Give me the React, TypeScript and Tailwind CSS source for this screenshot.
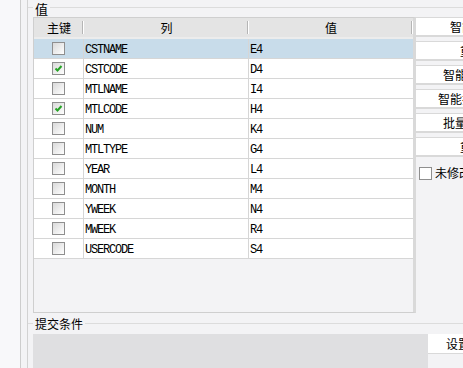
import React from "react";

const rows = [
  { name: "CSTNAME", val: "E4", key: false, sel: true },
  { name: "CSTCODE", val: "D4", key: true },
  { name: "MTLNAME", val: "I4", key: false },
  { name: "MTLCODE", val: "H4", key: true },
  { name: "NUM", val: "K4", key: false },
  { name: "MTLTYPE", val: "G4", key: false },
  { name: "YEAR", val: "L4", key: false },
  { name: "MONTH", val: "M4", key: false },
  { name: "YWEEK", val: "N4", key: false },
  { name: "MWEEK", val: "R4", key: false },
  { name: "USERCODE", val: "S4", key: false },
];

function Check({ checked }: { checked: boolean }) {
  return (
    <div className="w-[13px] h-[13px] border border-[#8f8f8f] bg-linear-to-br from-[#d9d9d9] to-white flex items-center justify-center">
      {checked && (
        <svg width="11" height="11" viewBox="0 0 11 11">
          <path d="M2.5 5.5 L4.5 7.5 L8.5 3" stroke="#26a326" strokeWidth="2" fill="none" />
        </svg>
      )}
    </div>
  );
}

function Btn({ text, pl }: { text: string; pl: string }) {
  return (
    <div className={`h-[20px] w-[120px] bg-white border-t border-b-2 border-[#d9d9d9] leading-[17px] whitespace-nowrap ${pl}`}>
      {text}
    </div>
  );
}

export default function App() {
  return (
    <div className="w-[463px] h-[368px] overflow-hidden bg-[#f3f3f5] flex font-['Noto_Sans_CJK_SC',sans-serif] text-[12px] text-black">
      <div className="w-[21px] shrink-0 bg-[#f8f8fa] border-r border-[#cdcdcd]" />
      <div className="w-[7px] shrink-0 border-r border-[#d2d2d2]" />
      <div className="flex-1 min-w-0 flex flex-col">
        <div className="h-[17px] shrink-0 flex items-start">
          <span className="mt-[7px] w-[5px] h-px bg-[#dcdcdc]" />
          <span className="px-[2px] text-[13px] leading-[17px]">值</span>
          <span className="mt-[7px] flex-1 h-px bg-[#dcdcdc]" />
        </div>
        <div className="h-[296px] shrink-0 flex">
          <div className="ml-[5px] w-[383px] shrink-0 border border-[#cfcfcf] border-r-[3px] border-r-[#d9d9d9] bg-[#f3f3f5] flex flex-col">
            <div className="h-[21px] bg-[#e4e4e4] border-b-2 border-b-[#ececec] flex">
              <div className="w-[50px] relative flex items-center justify-center">
                主键
                <span className="absolute right-0 top-[3px] h-[13px] w-[2px] border-l border-[#b5b5b5] border-r border-r-white" />
              </div>
              <div className="w-[165px] relative flex items-center justify-center">
                列
                <span className="absolute right-0 top-[3px] h-[13px] w-[2px] border-l border-[#b5b5b5] border-r border-r-white" />
              </div>
              <div className="w-[164px] relative flex items-center justify-center">
                值
                <span className="absolute right-0 top-[3px] h-[13px] w-[2px] border-l border-[#b5b5b5] border-r border-r-white" />
              </div>
            </div>
            {rows.map((r) => (
              <div
                key={r.name}
                className={`h-[20px] flex border-b border-[#d6d6d6] font-['Liberation_Mono',monospace] text-[12px] tracking-[-1.2px] ${r.sel ? "bg-[#c8dcea]" : "bg-white"}`}
              >
                <div className="w-[50px] border-r border-[#d6d6d6] flex items-center justify-center">
                  <Check checked={r.key} />
                </div>
                <div className="w-[165px] border-r border-[#d6d6d6] pl-[1px] pt-[2px] flex items-center">{r.name}</div>
                <div className="w-[164px] pl-[1px] pt-[2px] flex items-center">{r.val}</div>
              </div>
            ))}
          </div>
          <div className="w-[120px] shrink-0 flex flex-col gap-[4px]">
            <Btn text="智能匹配" pl="pl-[34px]" />
            <Btn text="重新加载" pl="pl-[44px]" />
            <Btn text="智能识别" pl="pl-[27px]" />
            <Btn text="智能排序" pl="pl-[22px]" />
            <Btn text="批量设置" pl="pl-[27px]" />
            <Btn text="重置" pl="pl-[44px]" />
            <div className="mt-[5px] flex items-center gap-[3px] pl-[3px]">
              <div className="w-[13px] h-[13px] border border-[#8f8f8f] bg-white" />
              <span className="whitespace-nowrap leading-[14px]">未修改</span>
            </div>
          </div>
        </div>
        <div className="h-[21px] shrink-0 flex items-center">
          <span className="w-[5px] h-px bg-[#dcdcdc]" />
          <span className="px-[2px] leading-[14px]">提交条件</span>
          <span className="flex-1 h-px bg-[#dcdcdc]" />
        </div>
        <div className="flex-1 flex">
          <div className="ml-[5px] w-[395px] shrink-0 bg-[#dfdfe1]" />
          <div className="w-[100px] shrink-0">
            <div className="h-[20px] bg-white border-b border-[#d9d9d9] pl-[18px] leading-[19px] whitespace-nowrap">设置条件</div>
          </div>
        </div>
      </div>
    </div>
  );
}
